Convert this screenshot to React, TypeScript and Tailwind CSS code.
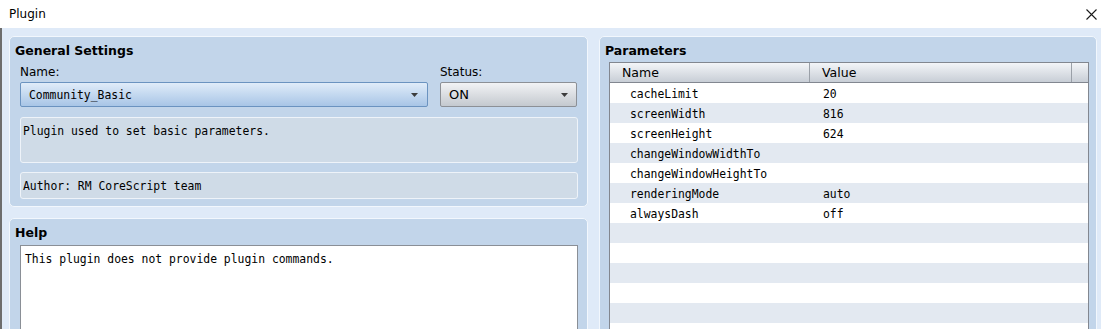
const mono = "font-['DejaVu_Sans_Mono',monospace] text-[11.4px]";

const params = [
  { name: 'cacheLimit', value: '20' },
  { name: 'screenWidth', value: '816' },
  { name: 'screenHeight', value: '624' },
  { name: 'changeWindowWidthTo', value: '' },
  { name: 'changeWindowHeightTo', value: '' },
  { name: 'renderingMode', value: 'auto' },
  { name: 'alwaysDash', value: 'off' },
];

function Arrow() {
  return (
    <svg width="7" height="4" viewBox="0 0 7 4" className="shrink-0">
      <path d="M0 0 H7 L3.5 4 Z" fill="#3c3c3c" />
    </svg>
  );
}

function Panel({ title, className, children }: { title: string; className?: string; children: React.ReactNode }) {
  return (
    <section className={`rounded-[5px] border border-[#f2f7fd] bg-[#c2d5ea] flex flex-col ${className ?? ''}`}>
      <h2 className="pt-[6px] pl-[5px] h-[21px] text-[12.5px] leading-[16px] font-bold">{title}</h2>
      {children}
    </section>
  );
}

export default function App() {
  const rows = [...params, ...Array.from({ length: 7 }, () => ({ name: '', value: '' }))];

  return (
    <div className="w-[1101px] h-[329px] overflow-hidden bg-[#dfeaf8] flex flex-col font-['DejaVu_Sans',sans-serif] text-black">
      <div className="h-[28px] shrink-0 bg-white flex items-center justify-between pl-[9px] pr-[4px]">
        <span className="text-[12px]">Plugin</span>
        <svg width="11" height="11" viewBox="0 0 11 11">
          <path d="M0.5 0.5 L10.5 10.5 M10.5 0.5 L0.5 10.5" stroke="#1a1a1a" strokeWidth="1.1" />
        </svg>
      </div>

      <div className="flex-1 min-h-0 flex gap-[11px] border-l-2 border-[#6d6d6d] pt-[8px] pl-[7px]">
        <div className="w-[579px] shrink-0 flex flex-col gap-[11px]">
          <Panel title="General Settings" className="h-[171px] shrink-0">
            <div className="pl-[10px] pr-[9px] flex flex-col">
              <div className="flex gap-[12px]">
                <div className="w-[408px] flex flex-col">
                  <span className="h-[24px] pt-[6px] text-[12px] leading-[16px]">Name:</span>
                  <div className="h-[25px] flex items-center justify-between pl-[8px] pr-[9px] rounded-[2px] border border-[#6b93c0] bg-gradient-to-b from-[#e0ecf9] to-[#a8c5e6]">
                    <span className={`pt-[2px] ${mono}`}>Community_Basic</span>
                    <Arrow />
                  </div>
                </div>
                <div className="w-[137px] flex flex-col">
                  <span className="h-[24px] pt-[6px] text-[12px] leading-[16px]">Status:</span>
                  <div className="h-[25px] flex items-center justify-between pl-[8px] pr-[8px] rounded-[2px] border border-[#8c9096] bg-gradient-to-b from-[#f2f3f5] to-[#c4c9cf]">
                    <span className="pt-[1px] text-[13px]">ON</span>
                    <Arrow />
                  </div>
                </div>
              </div>
              <div className={`mt-[10px] h-[46px] rounded-[3px] border border-[#eef3f9] bg-[#cfdbe7] pl-[2px] pt-[5px] leading-[16px] ${mono}`}>
                Plugin used to set basic parameters.
              </div>
              <div className={`mt-[9px] h-[27px] rounded-[3px] border border-[#eef3f9] bg-[#cfdbe7] pl-[2px] pt-[2px] flex items-center ${mono}`}>
                Author: RM CoreScript team
              </div>
            </div>
          </Panel>

          <Panel title="Help" className="flex-1 min-h-[140px]">
            <div className="pl-[10px] pr-[9px] pt-[5px] flex-1 flex flex-col">
              <div className={`flex-1 border border-[#8a8f96] bg-white pl-[4px] pt-[5px] leading-[16px] ${mono}`}>
                This plugin does not provide plugin commands.
              </div>
            </div>
          </Panel>
        </div>

        <Panel title="Parameters" className="w-[498px] shrink-0 min-h-[320px]">
          <div className="pl-[9px] pt-[4px]">
            <div className="w-[480px] border border-[#828790] bg-white">
              <div className="h-[20px] flex border-b border-[#828790] bg-gradient-to-b from-[#f3f5f8] to-[#c8ced6] text-[12.5px]">
                <div className="w-[200px] border-r border-[#9aa0a8] pl-[12px] pt-[2px] flex items-center">Name</div>
                <div className="w-[262px] border-r border-[#9aa0a8] pl-[12px] pt-[2px] flex items-center">Value</div>
                <div className="flex-1" />
              </div>
              {rows.map((r, i) => (
                <div key={i} className={`h-[20px] pt-[3px] flex items-center ${mono} ${i % 2 === 1 ? 'bg-[#e3e9f1]' : 'bg-white'}`}>
                  <span className="w-[200px] pl-[20px]">{r.name}</span>
                  <span className="pl-[13px]">{r.value}</span>
                </div>
              ))}
            </div>
          </div>
        </Panel>
      </div>
    </div>
  );
}
